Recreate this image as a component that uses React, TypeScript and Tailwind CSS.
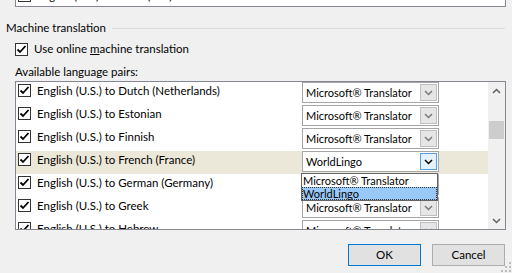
import React from 'react';

const rows = [
  { label: 'English (U.S.) to Dutch (Netherlands)', engine: 'Microsoft® Translator' },
  { label: 'English (U.S.) to Estonian', engine: 'Microsoft® Translator' },
  { label: 'English (U.S.) to Finnish', engine: 'Microsoft® Translator' },
  { label: 'English (U.S.) to French (France)', engine: 'WorldLingo', active: true },
  { label: 'English (U.S.) to German (Germany)', engine: 'Microsoft® Translator' },
  { label: 'English (U.S.) to Greek', engine: 'Microsoft® Translator' },
  { label: 'English (U.S.) to Hebrew', engine: 'Microsoft® Translator' },
];

const Check: React.FC = () => (
  <div className="w-[13px] h-[13px] border border-[#333333] bg-white flex items-center justify-center shrink-0">
    <svg width="11" height="11" viewBox="0 0 11 11">
      <path d="M1.5 5.5 L4 8 L9.5 2" fill="none" stroke="#000" strokeWidth="1.8" />
    </svg>
  </div>
);

const Chevron: React.FC<{ color: string }> = ({ color }) => (
  <svg width="9" height="6" viewBox="0 0 9 6">
    <path d="M1 1 L4.5 4.5 L8 1" fill="none" stroke={color} strokeWidth="1.5" />
  </svg>
);

const Combo: React.FC<{ value: string; active?: boolean }> = ({ value, active }) => (
  <div className="w-[137px] h-[21px] shrink-0 border border-[#a5a5a5] bg-white flex items-center pl-[3px] pr-[1px]">
    <span className="flex-1 whitespace-nowrap overflow-hidden">{value}</span>
    <div
      className={
        active
          ? 'w-[17px] h-[17px] border border-[#569de5] bg-[#e5f1fb] flex items-center justify-center'
          : 'w-[17px] h-[17px] border border-[#c0c0c0] bg-[#e6e6e6] flex items-center justify-center'
      }
    >
      <Chevron color={active ? '#000000' : '#7a7a7a'} />
    </div>
  </div>
);

const App: React.FC = () => {
  return (
    <div
      className="w-[512px] h-[273px] bg-[#f0f0f0] text-[11px] leading-[16px] text-black relative overflow-hidden flex flex-col"
      style={{ fontFamily: 'Lato, "Noto Sans", sans-serif' }}
    >
      {/* clipped list above */}
      <div className="ml-[15px] w-[491px] h-[7px] border-x border-b border-[#828790] bg-white overflow-hidden">
        <div className="mt-[-16px] flex items-center gap-[6px] pl-[2px] h-[23px]">
          <Check />
          <span className="whitespace-nowrap">English (U.S.) to Dutch (U.S.)</span>
        </div>
      </div>

      <div className="mt-[13px] flex items-center pl-[6px] pr-[7px] text-[11.5px]">
        <span className="whitespace-nowrap">Machine translation</span>
        <div className="flex-1 h-px bg-[#dcdcdc] ml-[6px]" />
      </div>

      <div className="mt-[5px] ml-[15px] flex items-center gap-[6px] text-[11.5px]">
        <Check />
        <span>
          Use online <span className="underline">m</span>achine translation
        </span>
      </div>

      <div className="mt-[7px] ml-[15px] text-[11.5px]">Available language pairs:</div>

      <div className="mt-[1px] ml-[15px] w-[491px] h-[149px] border border-[#828790] bg-white flex overflow-hidden">
        <div className="flex-1 flex flex-col overflow-hidden">
          {rows.map((r) => (
            <div
              key={r.label}
              className={`h-[23px] shrink-0 flex items-start pl-[2px] pr-[49px] ${r.active ? 'bg-[#ebe8d9]' : ''}`}
            >
              <div className="mt-[2px]">
                <Check />
              </div>
              <span className="ml-[6px] mt-px flex-1 whitespace-nowrap text-[11.5px]">{r.label}</span>
              <Combo value={r.engine} active={r.active} />
            </div>
          ))}
        </div>
        <div className="w-[17px] bg-[#f0f0f0] flex flex-col items-center">
          <div className="h-[17px] flex items-center justify-center">
            <svg width="9" height="6" viewBox="0 0 9 6">
              <path d="M1 5 L4.5 1.5 L8 5" fill="none" stroke="#606060" strokeWidth="1.5" />
            </svg>
          </div>
          <div className="mt-[22px] w-[15px] h-[18px] bg-[#cdcdcd]" />
          <div className="flex-1" />
          <div className="h-[17px] flex items-center justify-center">
            <Chevron color="#606060" />
          </div>
        </div>
      </div>

      <div className="mt-[14px] flex justify-end gap-[11px] pr-[7px] text-[11.5px]">
        <button className="w-[73px] h-[22px] border border-[#0078d7] bg-[#e1e1e1]">OK</button>
        <button className="w-[73px] h-[22px] border border-[#adadad] bg-[#e1e1e1]">Cancel</button>
      </div>

      {/* open dropdown */}
      <div className="absolute left-[301px] top-[173px] w-[137px] border border-[#646464] bg-white leading-[13px]">
        <div className="pl-[1px] h-[13px] whitespace-nowrap">Microsoft® Translator</div>
        <div className="pl-[1px] h-[13px] bg-[#99c9f8] outline outline-1 outline-dotted outline-[#333] -outline-offset-1 whitespace-nowrap">
          WorldLingo
        </div>
      </div>

      {/* size grip */}
      <svg className="absolute right-[1px] bottom-[1px]" width="10" height="10" viewBox="0 0 10 10">
        {[
          [8, 0], [8, 4], [4, 4], [8, 8], [4, 8], [0, 8],
        ].map(([x, y]) => (
          <rect key={`${x}-${y}`} x={x} y={y} width="2" height="2" fill="#bcbcbc" />
        ))}
      </svg>
    </div>
  );
};

export default App;
